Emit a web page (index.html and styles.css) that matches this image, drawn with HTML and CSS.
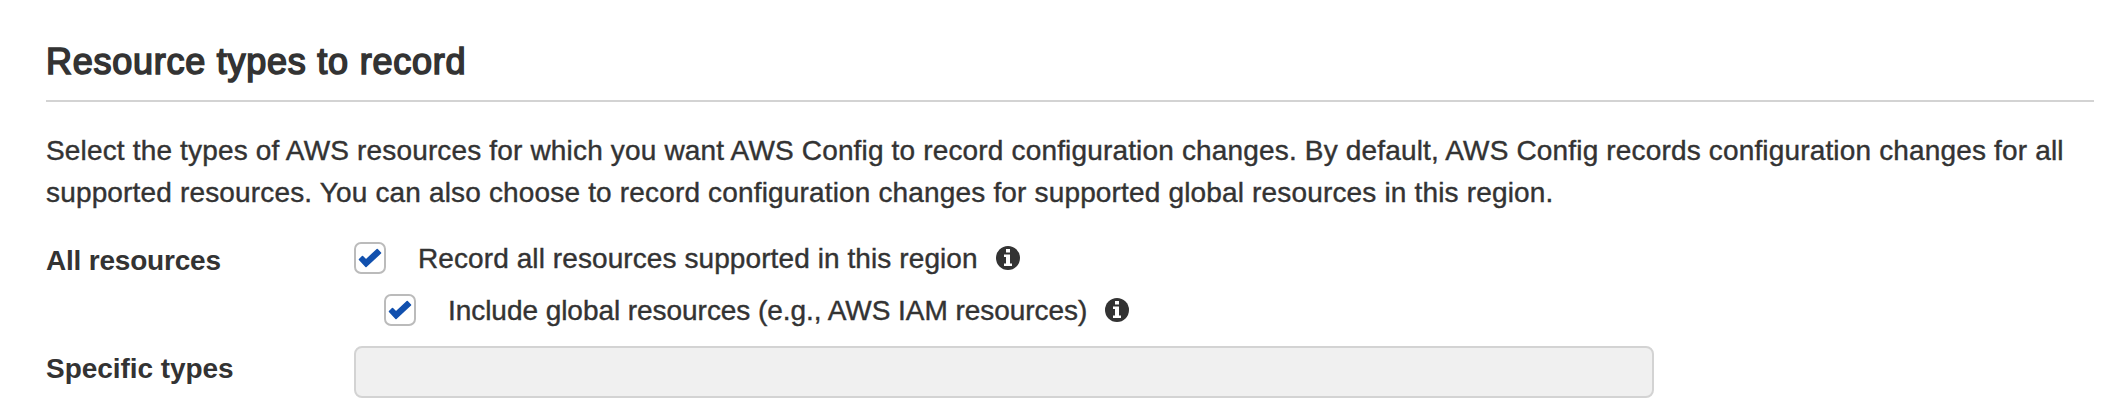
FILE: index.html
```html
<!DOCTYPE html>
<html lang="en">
<head>
<meta charset="utf-8">
<title>Resource types to record</title>
<link rel="stylesheet" href="styles.css">
</head>
<body>
<main class="panel">
  <h1 class="title">Resource types to record</h1>
  <p class="intro">Select the types of AWS resources for which you want AWS Config to record configuration changes. By default, AWS Config records configuration changes for all<br>supported resources. You can also choose to record configuration changes for supported global resources in this region.</p>
  <div class="row">
    <span class="label all">All resources</span>
    <div class="options">
      <div class="option">
        <span class="box"><svg viewBox="0 0 28 28"><path d="M3.500 15.500L6.500 12.500L10 16L21.200 5.500L24.500 9L10 22.500Z"/></svg></span>
        <span class="text region">Record all resources supported in this region</span>
        <svg class="info" viewBox="0 0 24 24"><circle cx="12" cy="12" r="12"/><path d="M10 3h4v3.500h-4zM8 8.500h6v9h2V20H8v-2.500h2v-6.500H8z"/></svg>
      </div>
      <div class="option nested">
        <span class="box"><svg viewBox="0 0 28 28"><path d="M3.500 15.500L6.500 12.500L10 16L21.200 5.500L24.500 9L10 22.500Z"/></svg></span>
        <span class="text global">Include global resources (e.g., AWS IAM resources)</span>
        <svg class="info" viewBox="0 0 24 24"><circle cx="12" cy="12" r="12"/><path d="M10 3h4v3.500h-4zM8 8.500h6v9h2V20H8v-2.500h2v-6.500H8z"/></svg>
      </div>
    </div>
  </div>
  <div class="row">
    <span class="label types">Specific types</span>
    <div class="field"></div>
  </div>
</main>
</body>
</html>
```
FILE: styles.css
```css
* { box-sizing: border-box; }
body { margin: 0; background: #fff; color: #333; font-family: "Liberation Sans", Arial, sans-serif; }
.panel { padding: 38px 12px 0 46px; }
.title { margin: 0; height: 64px; border-bottom: 2px solid #d3d3d3; font-size: 36px; line-height: 48px; font-weight: 400; letter-spacing: 0.75px; -webkit-text-stroke: 1.6px #333; }
.intro { margin: 28px 0 0; font-size: 28px; line-height: 42px; white-space: nowrap; letter-spacing: 0.163px; -webkit-text-stroke: 0.4px #333; }
.row { display: flex; }
.label { width: 308px; flex: none; font-size: 28px; line-height: 42px; font-weight: 700; }
.options { padding-top: 28px; }
.all { padding-top: 26px; letter-spacing: -0.2px; }
.types { padding-top: 2px; letter-spacing: -0.05px; }
.option { display: flex; align-items: center; height: 32px; margin-bottom: 20px; }
.nested { margin-left: 30px; }
.box { width: 32px; height: 32px; border: 2px solid #bbb; border-radius: 7px; background: #fff; }
.box svg { display: block; width: 28px; height: 28px; fill: #1150ae; stroke: #1150ae; stroke-width: 1.6; stroke-linejoin: round; }
.text { margin-left: 32px; padding-top: 2px; font-size: 28px; white-space: nowrap; -webkit-text-stroke: 0.4px #333; }
.region { width: 560px; letter-spacing: 0.09px; }
.global { width: 639px; letter-spacing: -0.05px; }
.info { width: 24px; height: 24px; margin-left: 18px; fill: #333; }
.info path { fill: #fff; }
.field { width: 1300px; height: 52px; border: 2px solid #d3d3d3; border-radius: 8px; background: #f0f0f0; }
```
